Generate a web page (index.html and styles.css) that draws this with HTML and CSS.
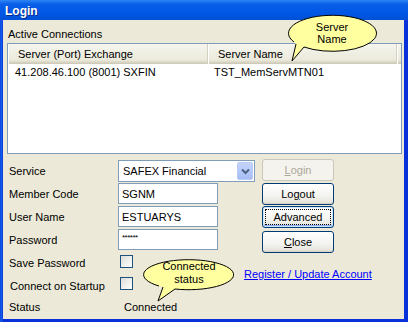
FILE: index.html
```html
<!DOCTYPE html>
<html>
<head>
<title>Login</title>
<link rel="stylesheet" href="styles.css">
</head>
<body>
<div class="window">
  <div class="titlebar">Login</div>
  <div class="client">
    <div class="group-label">Active Connections</div>
    <div class="listview">
      <div class="lv-header">
        <div class="hcol hcol1">Server (Port) Exchange</div>
        <div class="hcol hcol2">Server Name</div>
        <div class="hcol hcol3"></div>
      </div>
      <div class="lv-row">
        <div class="cell cell1">41.208.46.100 (8001) SXFIN</div>
        <div class="cell cell2">TST_MemServMTN01</div>
      </div>
    </div>

    <div class="form">
      <div class="label r1">Service</div>
      <div class="select r1"><span class="select-text">SAFEX Financial</span><span class="drop"><svg width="9" height="7" viewBox="0 0 9 7"><path d="M1 1.5 L4.5 5 L8 1.5" fill="none" stroke="#4d6185" stroke-width="2"/></svg></span></div>
      <div class="btn disabled b1 r1"><u>L</u>ogin</div>

      <div class="label r2">Member Code</div>
      <div class="input r2">SGNM</div>
      <div class="btn b2 r2">Lo<u>g</u>out</div>

      <div class="label r3">User Name</div>
      <div class="input r3">ESTUARYS</div>
      <div class="btn focus b3 r3"><span class="focus-ring">Advanced</span></div>

      <div class="label r4">Password</div>
      <div class="input pass r4">******</div>
      <div class="btn b4 r4"><u>C</u>lose</div>

      <div class="label r5">Save Password</div>
      <div class="check c1 r5"></div>

      <div class="label startup r6">Connect on Startup</div>
      <div class="check c2 r6"></div>
      <a class="link" href="#">Register / Update Account</a>

      <div class="label r7">Status</div>
      <div class="status r7">Connected</div>
    </div>
  </div>

  <!-- callouts drawn over the dialog -->
  <div class="callout callout-server">
    <svg width="96" height="56" viewBox="0 0 96 56">
      <path d="M10 29 A44 18 0 1 1 20 34 L8 48 L12 31" fill="#ffffa0" stroke="#000" stroke-width="1"/>
      <text x="48" y="18" text-anchor="middle">Server</text>
      <text x="48" y="30" text-anchor="middle">Name</text>
    </svg>
  </div>
  <div class="callout callout-status">
    <svg width="96" height="48" viewBox="0 0 96 48">
      <path d="M16 28 A45 15 0 1 1 32 31 L15 43 L20 29" fill="#ffffa0" stroke="#000" stroke-width="1"/>
      <text x="46" y="12" text-anchor="middle">Connected</text>
      <text x="46" y="25" text-anchor="middle">status</text>
    </svg>
  </div>
</div>
</body>
</html>
```

FILE: styles.css
```css
/* XP style login dialog */

body
{ margin: 0;
font-family: "Liberation Sans", Arial, sans-serif;
font-size: 11px;
color: #000;
}

div.window
{ position: relative;
width: 408px;
height: 322px;
display: flex;
flex-direction: column;
background: linear-gradient(to right, #0831d9, #166aee 1px, #0831d9 3px);
}

div.titlebar
{ flex: none;
height: 20px;
display: flex;
align-items: center;
padding-left: 5px;
padding-top: 1px;
box-sizing: border-box;
color: #fff;
font-weight: bold;
font-size: 12px;
background: linear-gradient(to bottom, #2e86f5 0%, #0a5fe8 20%, #0058e6 60%, #0050d6 100%);
text-shadow: 1px 1px #0a2a8a;
}

div.client
{ flex: 1;
margin: 0 4px 3px 3px;
background: #ece9d8;
display: flex;
flex-direction: column;
}

div.group-label
{ margin: 7px 0 0 5px;
line-height: 14px;
}

div.listview
{ margin: 2px 0 0 4px;
width: 395px;
height: 111px;
box-sizing: border-box;
border: 1px solid #7f9db9;
background: #fff;
}

div.lv-header
{ display: flex;
height: 20px;
background: linear-gradient(to bottom, #f6f5ee, #ebeadb 80%, #dcd8c6 90%, #cbc7b8);
}

div.hcol
{ display: flex;
align-items: center;
box-sizing: border-box;
border-right: 1px solid #d4d0c0;
box-shadow: 1px 0 0 #fff inset;
}

div.hcol1
{ width: 200px;
padding-left: 10px;
}

div.hcol2
{ width: 189px;
padding-left: 10px;
}

div.hcol3
{ flex: 1;
border-right: none;
}

div.lv-row
{ display: flex;
height: 16px;
align-items: center;
}

div.cell1
{ width: 200px;
padding-left: 7px;
box-sizing: border-box;
}

div.cell2
{ padding-left: 6px;
}

div.form
{ margin: 5px 0 0 6px;
display: grid;
grid-template-columns: 109px 144px 72px;
grid-template-rows: 23px 23px 23px 23px 23px 23px 19px;
}

div.label
{ grid-column: 1;
align-self: center;
}

div.label.startup
{ padding-left: 1px;
}

.r1 { grid-row: 1; }
.r2 { grid-row: 2; }
.r3 { grid-row: 3; }
.r4 { grid-row: 4; }
.r5 { grid-row: 5; }
.r6 { grid-row: 6; }
.r7 { grid-row: 7; }

div.select
{ grid-column: 2;
align-self: start;
margin-top: 1px;
width: 137px;
height: 22px;
box-sizing: border-box;
border: 1px solid #7f9db9;
background: #fff;
display: flex;
align-items: center;
padding: 1px;
}

span.select-text
{ flex: 1;
padding-left: 3px;
}

span.drop
{ width: 16px;
height: 18px;
box-sizing: border-box;
border: 1px solid #b9cbf3;
border-radius: 2px;
background: linear-gradient(to bottom, #c6d4fc, #b1c6f8 60%, #a6bdf6);
display: flex;
align-items: center;
justify-content: center;
}

div.input
{ grid-column: 2;
align-self: start;
margin-top: 1px;
width: 100px;
height: 21px;
box-sizing: border-box;
border: 1px solid #7f9db9;
background: #fff;
padding-left: 3px;
display: flex;
align-items: center;
}

div.input.pass
{ align-items: flex-start;
font-size: 8px;
padding-top: 3px;
letter-spacing: -0.5px;
}

div.btn
{ grid-column: 3;
align-self: start;
width: 72px;
height: 22px;
box-sizing: border-box;
border: 1px solid #003c74;
border-radius: 3px;
background: linear-gradient(to bottom, #ffffff, #f3f3ef 60%, #e6e5dd 90%, #d6d0c5);
display: flex;
align-items: center;
justify-content: center;
}

div.b2, div.b3 { margin-top: 1px; }
div.b4 { margin-top: 3px; }

div.btn.disabled
{ border-color: #c9c7ba;
background: #f4f3ee;
color: #aca899;
}

div.btn.focus
{ box-shadow: inset 0 0 0 1px #cee7ff, inset 0 -1px 0 1px #89adf0;
}

span.focus-ring
{ width: 64px;
height: 14px;
display: flex;
align-items: center;
justify-content: center;
outline: 1px dotted #000;
}

div.check
{ grid-column: 2;
align-self: start;
margin-left: 2px;
width: 13px;
height: 13px;
box-sizing: border-box;
border: 1px solid #1c5180;
background: linear-gradient(135deg, #dcdcd7, #fff);
}

div.c1 { margin-top: 4px; }
div.c2 { margin-top: 3px; }

a.link
{ grid-column: 2 / 4;
grid-row: 5 / 7;
align-self: center;
margin-left: 126px;
white-space: nowrap;
color: #0000ff;
text-decoration: underline;
}

div.status
{ grid-column: 2;
align-self: center;
margin-left: 6px;
}

div.callout
{ position: absolute;
}

div.callout text
{ font-family: "Liberation Sans", Arial, sans-serif;
font-size: 11px;
}

div.callout-server
{ left: 284px;
top: 13px;
}

div.callout-status
{ left: 143px;
top: 258px;
}
```
